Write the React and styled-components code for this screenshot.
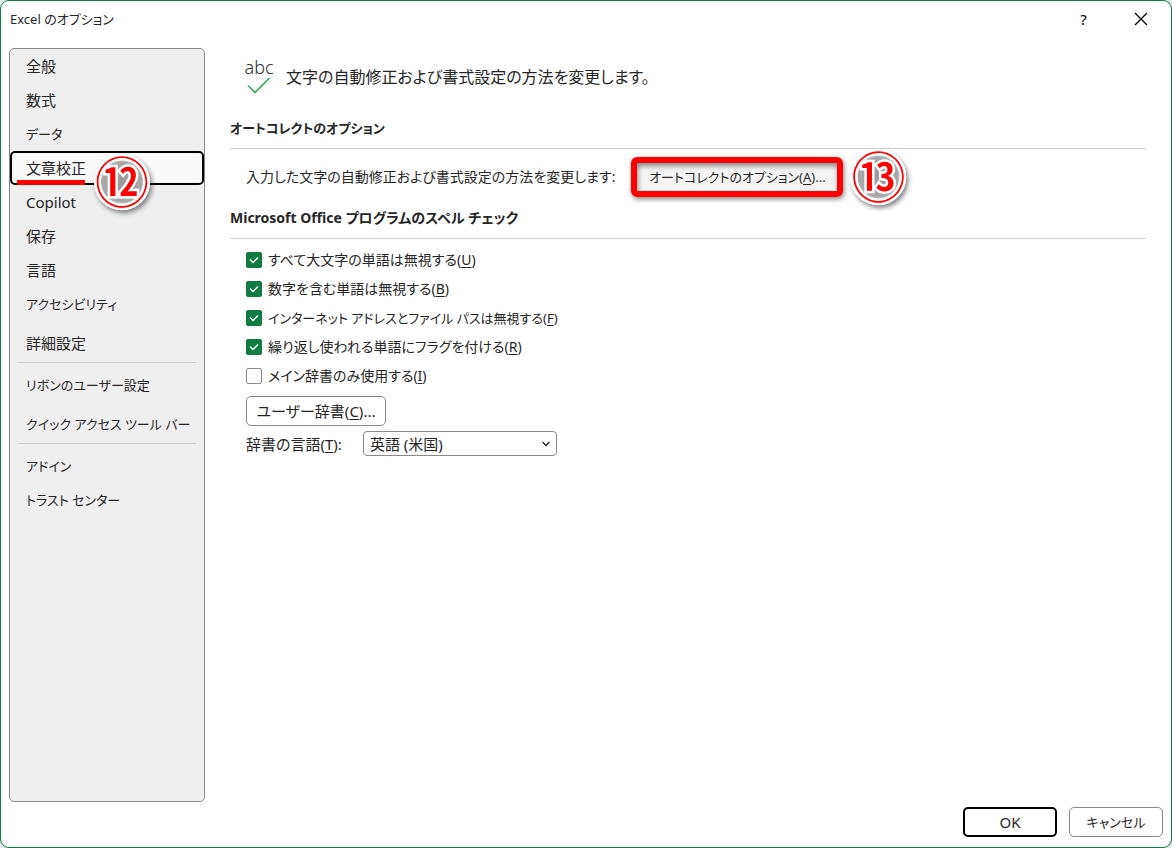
import React, { useState } from "react";
import styled, { createGlobalStyle } from "styled-components";

const Color = {
  text: "#262626",
  green: "#107c41",
  gray1: "#efefef",
  gray2: "#d0d0d0",
  gray3: "#8a8a8a",
  white: "#ffffff",
  red: "#ff0000",
};

// kana: labels written mostly in katakana are set one step smaller
const Size = {
  kana: "13px",
  small: "14px",
  normal: "15px",
  large: "16px",
};

const navGroups = [
  [
    { label: "全般" },
    { label: "数式" },
    { label: "データ", kana: true },
    { label: "文章校正" },
    { label: "Copilot" },
    { label: "保存" },
    { label: "言語" },
    { label: "アクセシビリティ", kana: true },
    { label: "詳細設定", spaced: true },
  ],
  [
    { label: "リボンのユーザー設定", kana: true },
    { label: "クイック アクセス ツール バー", kana: true, spaced: true },
  ],
  [
    { label: "アドイン", kana: true },
    { label: "トラスト センター", kana: true },
  ],
];

const spellOptions = [
  { id: "upper", label: "すべて大文字の単語は無視する", accessKey: "U", checked: true },
  { id: "numbers", label: "数字を含む単語は無視する", accessKey: "B", checked: true },
  {
    id: "paths",
    label: "インターネット アドレスとファイル パスは無視する",
    accessKey: "F",
    checked: true,
    kana: true,
  },
  { id: "repeated", label: "繰り返し使われる単語にフラグを付ける", accessKey: "R", checked: true },
  { id: "main", label: "メイン辞書のみ使用する", accessKey: "I", checked: false },
];

function Key({ children }) {
  return (
    <>
      (<KeyLetter>{children}</KeyLetter>)
    </>
  );
}

function SpellOption({ option }) {
  const [checked, setChecked] = useState(option.checked);

  return (
    <OptionLabel htmlFor={option.id} $kana={option.kana}>
      <CheckWrap>
        <CheckBox
          id={option.id}
          type="checkbox"
          checked={checked}
          onChange={(e) => setChecked(e.target.checked)}
        />
        {checked && (
          <svg width="16" height="16" viewBox="0 0 16 16" aria-hidden="true">
            <path d="M4 7.500l3 3 5-5" fill="none" stroke="#fff" strokeWidth="1.300" />
          </svg>
        )}
      </CheckWrap>
      <span>
        {option.label}
        <Key>{option.accessKey}</Key>
      </span>
    </OptionLabel>
  );
}

export default function App() {
  const [selected, setSelected] = useState("文章校正");

  return (
    <>
      <GlobalStyle />
      <Dialog>
        <TitleBar>
          <Title>Excel のオプション</Title>
          <TitleButton aria-label="ヘルプ">?</TitleButton>
          <TitleButton aria-label="閉じる">
            <svg width="14" height="14" viewBox="0 0 14 14" aria-hidden="true">
              <path d="M1 1l12 12M13 1L1 13" stroke="#000" strokeWidth="1.300" />
            </svg>
          </TitleButton>
        </TitleBar>

        <Body>
          <Sidebar>
            {navGroups.map((group, i) => (
              <NavGroup key={i}>
                {group.map(({ label, kana, spaced }) => (
                  <NavItem
                    key={label}
                    $kana={kana}
                    $spaced={spaced}
                    $selected={label === selected}
                    onClick={() => setSelected(label)}
                  >
                    {label}
                    {label === "文章校正" && (
                      <>
                        <Underline />
                        <NavBadge>⑫</NavBadge>
                      </>
                    )}
                  </NavItem>
                ))}
              </NavGroup>
            ))}
          </Sidebar>

          <Main>
            <Intro>
              <IntroIcon>
                abc
                <svg width="24" height="17" viewBox="0 0 24 17" aria-hidden="true">
                  <path d="M1 8.500l7 7L22.500 1" fill="none" stroke="#3aa757" strokeWidth="1.600" />
                </svg>
              </IntroIcon>
              <p>文字の自動修正および書式設定の方法を変更します。</p>
            </Intro>

            <SectionTitle $kana>オートコレクトのオプション</SectionTitle>
            <AutoCorrectRow>
              <span>入力した文字の自動修正および書式設定の方法を変更します:</span>
              <Highlight>
                <FramedButton>
                  オートコレクトのオプション
                  <Key>A</Key>...
                </FramedButton>
              </Highlight>
              <Badge>⑬</Badge>
            </AutoCorrectRow>

            <SectionTitle>Microsoft Office プログラムのスペル チェック</SectionTitle>
            <Options>
              {spellOptions.map((option) => (
                <SpellOption key={option.id} option={option} />
              ))}
              <DictionaryButton>
                ユーザー辞書
                <Key>C</Key>...
              </DictionaryButton>
              <LanguageRow>
                <label htmlFor="language">
                  辞書の言語
                  <Key>T</Key>:
                </label>
                <SelectWrap>
                  <Select id="language">
                    <option>英語 (米国)</option>
                  </Select>
                  <svg width="10" height="6" viewBox="0 0 10 6" aria-hidden="true">
                    <path d="M1.500 1L5 4.500 8.500 1" fill="none" stroke="#262626" strokeWidth="1.300" />
                  </svg>
                </SelectWrap>
              </LanguageRow>
            </Options>
          </Main>
        </Body>

        <Footer>
          <FooterButton $primary>OK</FooterButton>
          <FooterButton $kana>キャンセル</FooterButton>
        </Footer>
      </Dialog>
    </>
  );
}

const GlobalStyle = createGlobalStyle`
  * {
    box-sizing: border-box;
    margin: 0;
    padding: 0;
  }

  body {
    background-color: #e6e6e6;
  }

  body, button, input, select {
    font-family: "Noto Sans", "Noto Sans CJK JP", sans-serif;
    font-size: ${Size.normal};
    line-height: 20px;
    color: ${Color.text};
    font-feature-settings: "palt";
  }
`;

const Dialog = styled.div`
  display: flex;
  flex-direction: column;
  min-height: 100vh;
  background-color: ${Color.white};
  border: 1px solid ${Color.green};
  border-radius: 9px;
`;

const TitleBar = styled.header`
  display: flex;
  align-items: center;
  height: 36px;
  padding: 0 2px 0 9px;
`;

const Title = styled.h1`
  flex: 1;
  font-size: ${Size.kana};
  font-weight: normal;
`;

const TitleButton = styled.button`
  display: flex;
  align-items: center;
  justify-content: center;
  width: 57px;
  height: 36px;
  border: none;
  background: none;
  color: #000;
`;

const Body = styled.div`
  display: flex;
  flex: 1;
  gap: 25px;
  padding: 11px 25px 0 8px;
`;

const Sidebar = styled.nav`
  flex: none;
  width: 196px;
  background-color: ${Color.gray1};
  border: 1px solid ${Color.gray3};
  border-radius: 5px;
`;

const NavGroup = styled.div`
  display: flex;
  flex-direction: column;

  & + &::before {
    content: "";
    height: 1px;
    margin: 2px 8px 5px;
    background-color: ${Color.gray2};
  }
`;

const NavItem = styled.button`
  position: relative;
  height: 34px;
  margin-top: ${({ $spaced }) => ($spaced ? "5px" : "0")};
  padding-left: 14px;
  font-size: ${({ $kana }) => ($kana ? Size.kana : Size.normal)};
  text-align: left;
  white-space: nowrap;
  background-color: ${({ $selected }) => ($selected ? "#fafafa" : "transparent")};
  border: 2px solid ${({ $selected }) => ($selected ? "#000" : "transparent")};
  border-radius: 5px;
`;

const Underline = styled.span`
  position: absolute;
  left: 5px;
  bottom: -2px;
  width: 68px;
  height: 5px;
  background-color: ${Color.red};
`;

const Badge = styled.span`
  display: flex;
  align-items: center;
  justify-content: center;
  flex: none;
  width: 56px;
  height: 56px;
  font-family: "Noto Sans CJK JP", sans-serif;
  font-size: 54px;
  font-weight: 500;
  line-height: 52px;
  padding-bottom: 4px;
  color: ${Color.red};
  background: radial-gradient(#999, #aaa 50%, #fff 68%);
  border-radius: 50%;
  -webkit-text-stroke: 5px ${Color.white};
  paint-order: stroke fill;
  box-shadow: 2px 3px 5px rgba(0, 0, 0, 0.5);
`;

const NavBadge = styled(Badge)`
  position: absolute;
  z-index: 1;
  top: 1px;
  left: 82px;
`;

const Main = styled.main`
  flex: 1;
  min-width: 0;
`;

const Intro = styled.div`
  display: flex;
  align-items: center;
  gap: 12px;
  height: 58px;
  margin-bottom: 2px;
  padding-left: 14px;
  font-size: ${Size.large};
`;

const IntroIcon = styled.div`
  display: flex;
  flex-direction: column;
  align-items: center;
  width: 30px;
  padding-bottom: 4px;
  font-size: 18px;
  font-weight: 300;
  color: #333;
`;

const SectionTitle = styled.h2`
  height: 41px;
  padding-top: 10px;
  font-size: ${({ $kana }) => ($kana ? Size.kana : Size.small)};
  font-weight: bold;
  border-bottom: 1px solid ${Color.gray2};
`;

const AutoCorrectRow = styled.div`
  display: flex;
  align-items: center;
  height: 49px;
  padding: 7px 0 0 16px;
  font-size: ${Size.small};
  white-space: nowrap;
`;

const Highlight = styled.div`
  margin: 0 7px 0 16px;
  border: 6px solid ${Color.red};
  border-radius: 6px;
  box-shadow: 1px 2px 5px rgba(0, 0, 0, 0.5);
`;

const Button = styled.button`
  height: 30px;
  font-size: ${({ $kana }) => ($kana ? Size.kana : Size.normal)};
  background-color: ${Color.white};
  border: 1px solid ${Color.gray3};
  border-radius: 5px;
`;

const FramedButton = styled(Button)`
  display: block;
  width: 200px;
  height: 28px;
  font-size: ${Size.kana};
  background-color: #f4f4f4;
  border: none;
  border-radius: 0;
  box-shadow: inset 1px 3px 5px rgba(0, 0, 0, 0.45);
`;

const Options = styled.div`
  display: flex;
  flex-direction: column;
  align-items: flex-start;
  padding: 6px 0 0 16px;
`;

const OptionLabel = styled.label`
  display: flex;
  align-items: center;
  gap: 6px;
  height: 29px;
  font-size: ${({ $kana }) => ($kana ? Size.kana : Size.small)};
`;

const CheckWrap = styled.span`
  display: grid;

  > * {
    grid-area: 1 / 1;
  }

  svg {
    pointer-events: none;
  }
`;

const CheckBox = styled.input`
  appearance: none;
  width: 16px;
  height: 16px;
  background-color: ${Color.white};
  border: 1px solid ${Color.gray3};
  border-radius: 2px;

  &:checked {
    background-color: ${Color.green};
    border-color: ${Color.green};
  }
`;

const KeyLetter = styled.span`
  text-decoration: underline;
  text-underline-offset: 2px;
`;

const DictionaryButton = styled(Button)`
  width: 140px;
  margin: 6px 0 5px;
`;

const LanguageRow = styled.div`
  display: flex;
  align-items: center;
  gap: 21px;
`;

const SelectWrap = styled.div`
  display: grid;
  align-items: center;

  > * {
    grid-area: 1 / 1;
  }

  svg {
    justify-self: end;
    margin-right: 6px;
    pointer-events: none;
  }
`;

const Select = styled.select`
  appearance: none;
  width: 194px;
  height: 25px;
  padding-left: 6px;
  background-color: ${Color.white};
  border: 1px solid ${Color.gray3};
  border-radius: 4px;
`;

const Footer = styled.footer`
  display: flex;
  justify-content: flex-end;
  gap: 12px;
  padding: 5px 8px 10px;
`;

const FooterButton = styled(Button)`
  width: 94px;
  border: ${({ $primary }) => ($primary ? "2px solid #000" : `1px solid ${Color.gray3}`)};
`;
